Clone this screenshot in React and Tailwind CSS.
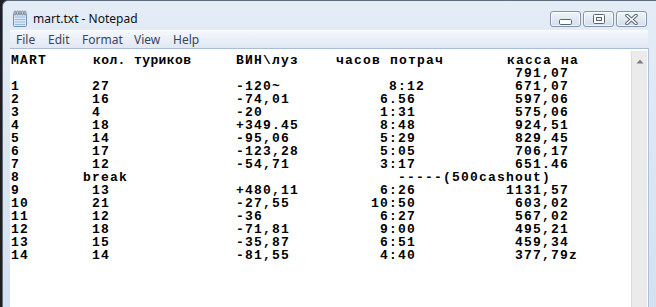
import React from "react";

// places each text at a fixed character column, like spaces in a text file
const place = (items) => {
  let s = "";
  for (const [col, text] of items) s = s.padEnd(col, " ") + text;
  return s;
};

const lines = [
  place([[56, "791,07"]]),
  place([[0, "1"], [9, "27"], [25, "-120~"], [42, "8:12"], [56, "671,07"]]),
  place([[0, "2"], [9, "16"], [25, "-74,01"], [41, "6.56"], [56, "597,06"]]),
  place([[0, "3"], [9, "4"], [25, "-20"], [41, "1:31"], [56, "575,06"]]),
  place([[0, "4"], [9, "18"], [25, "+349.45"], [41, "8:48"], [56, "924,51"]]),
  place([[0, "5"], [9, "14"], [25, "-95,06"], [41, "5:29"], [56, "829,45"]]),
  place([[0, "6"], [9, "17"], [25, "-123,28"], [41, "5:05"], [56, "706,17"]]),
  place([[0, "7"], [9, "12"], [25, "-54,71"], [41, "3:17"], [56, "651.46"]]),
  place([[0, "8"], [8, "break"], [43, "-----(500cashout)"]]),
  place([[0, "9"], [9, "13"], [25, "+480,11"], [41, "6:26"], [55, "1131,57"]]),
  place([[0, "10"], [9, "21"], [25, "-27,55"], [40, "10:50"], [56, "603,02"]]),
  place([[0, "11"], [9, "12"], [25, "-36"], [41, "6:27"], [56, "567,02"]]),
  place([[0, "12"], [9, "18"], [25, "-71,81"], [41, "9:00"], [56, "495,21"]]),
  place([[0, "13"], [9, "15"], [25, "-35,87"], [41, "6:51"], [56, "459,34"]]),
  place([[0, "14"], [9, "14"], [25, "-81,55"], [41, "4:40"], [56, "377,79z"]]),
];

const NotepadIcon = () => (
  <svg width="16" height="17" viewBox="0 0 16 17">
    <rect x="1.5" y="3.5" width="13" height="13" rx="1" fill="#d4e6f7" stroke="#6f93b8" />
    {[7, 9.5, 12, 14.5].map((y) => (
      <line key={y} x1="3" y1={y} x2="13" y2={y} stroke="#9dbbd9" />
    ))}
    {[3, 5.5, 8, 10.5, 13].map((x) => (
      <rect key={x} x={x - 0.8} y="1" width="1.6" height="4" rx="0.8" fill="#fff" stroke="#5f6f82" strokeWidth="0.8" />
    ))}
  </svg>
);

const CaptionButton = ({ children }) => (
  <div className="w-[31px] h-[16px] rounded-[3px] border border-[#8494ab] bg-gradient-to-b from-[#f1f5fa] to-[#d3ddea] shadow-[inset_0_0_0_1px_rgba(255,255,255,0.7)] flex items-center justify-center">
    {children}
  </div>
);

const menu = [
  ["File", "w-[32px]"],
  ["Edit", "w-[34px]"],
  ["Format", "w-[52px]"],
  ["View", "w-[39px]"],
  ["Help", "w-[30px]"],
];

export default function App() {
  return (
    <div className="w-[656px] h-[307px] overflow-hidden bg-[#1f1f1f] flex">
      <div className="ml-[2px] w-[670px] h-[330px] shrink-0 border-l border-t border-[#5d6d80] rounded-tl-[6px] bg-gradient-to-b from-[#e4ecf6] to-[#d3e0f0] pl-[7px] flex flex-col">
        {/* title bar */}
        <div className="w-[638px] h-[29px] flex items-start justify-between">
          <div className="flex items-center gap-[5px] pt-[9px] pl-[2px]">
            <NotepadIcon />
            <span className="font-['Noto_Sans',sans-serif] text-[12px] text-[#111] leading-none">mart.txt - Notepad</span>
          </div>
          <div className="flex gap-[2px] pt-[10px] pr-[1px]">
            <CaptionButton>
              <svg width="13" height="6" viewBox="0 0 13 6" className="mt-[5px]">
                <rect x="0.5" y="0.5" width="12" height="5" rx="1.2" fill="#fff" stroke="#56657a" />
              </svg>
            </CaptionButton>
            <CaptionButton>
              <svg width="12" height="10" viewBox="0 0 12 10">
                <rect x="0.5" y="0.5" width="11" height="9" rx="1" fill="#fff" stroke="#56657a" />
                <rect x="3.5" y="3.5" width="5" height="3" fill="#e9eef5" stroke="#56657a" />
              </svg>
            </CaptionButton>
            <CaptionButton>
              <svg width="13" height="11" viewBox="0 0 13 11">
                <path d="M2 1.5 L11 9.5 M11 1.5 L2 9.5" stroke="#56657a" strokeWidth="3.6" strokeLinecap="round" />
                <path d="M2 1.5 L11 9.5 M11 1.5 L2 9.5" stroke="#fff" strokeWidth="1.6" strokeLinecap="round" />
              </svg>
            </CaptionButton>
          </div>
        </div>

        {/* menu bar */}
        <div className="w-[638px] h-[18px] border-t border-[#fbfdff] bg-gradient-to-b from-[#f4f7fc] to-[#e1e8f4] flex items-center pl-[6px] font-['Noto_Sans',sans-serif] text-[12px] text-[#3a4658] leading-none">
          {menu.map(([label, w]) => (
            <span key={label} className={w}>{label}</span>
          ))}
        </div>

        {/* edit area */}
        <div className="w-[639px] flex-1 flex border-t border-[#a9bdd5] bg-white border-r border-r-[#aac2de]">
          <div className="flex-1 pl-[1px] pt-[5px] font-['Liberation_Mono',monospace] font-bold text-[13px] leading-[13px] tracking-[1.2px] text-black">
            <div className="flex whitespace-pre">
              <span className="w-[82px]">MART</span>
              <span className="w-[143px] tracking-[0.4px]">кол. туриков</span>
              <span className="w-[100px]">ВИН\луз</span>
              <span className="w-[171px]">часов потрач</span>
              <span>касса на</span>
            </div>
            {lines.map((l, i) => (
              <div key={i} className="whitespace-pre">{l}</div>
            ))}
          </div>
          <div className="w-[16px] mt-[2px] mr-[1px] bg-[#ebebeb] border-l border-[#dcdcdc] flex justify-center">
            <svg width="8" height="5" viewBox="0 0 8 5" className="mt-[8px]">
              <path d="M0.5 4.5 L4 0.8 L7.5 4.5 Z" fill="#7a7a7a" />
            </svg>
          </div>
        </div>
      </div>
    </div>
  );
}
